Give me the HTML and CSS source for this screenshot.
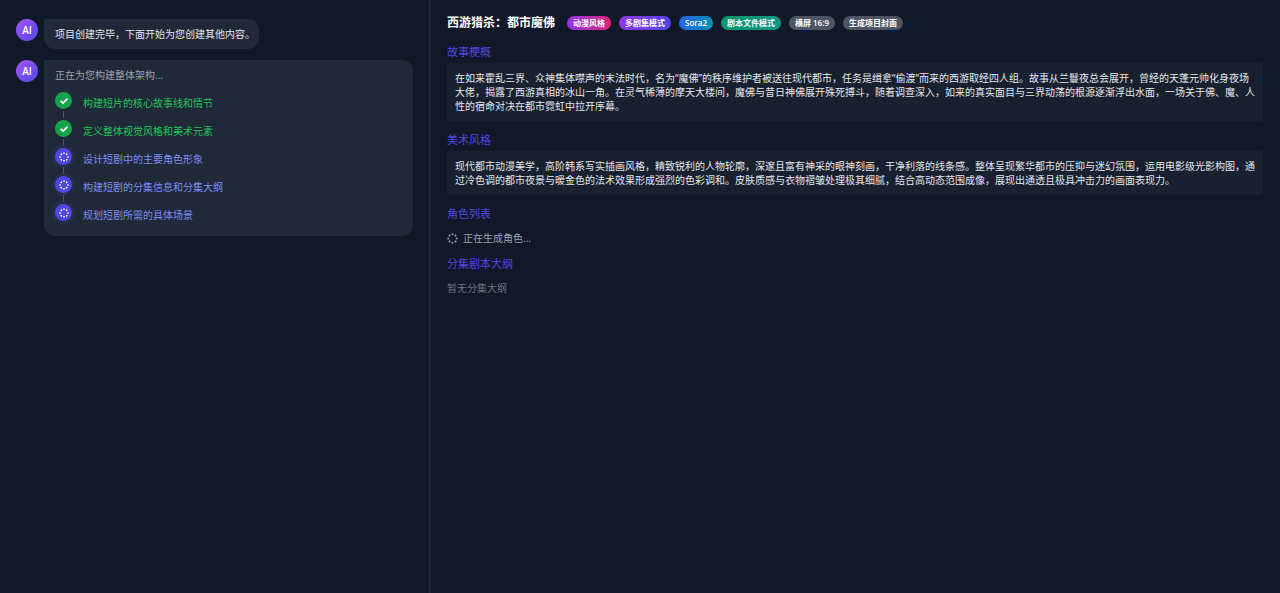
FILE: index.html
```
<!DOCTYPE html>
<html lang="zh-CN">
<head>
<meta charset="utf-8">
<meta name="viewport" content="width=device-width, initial-scale=1">
<title>西游猎杀：都市魔佛</title>
<link rel="stylesheet" href="styles.css">
</head>
<body>
<svg width="0" height="0" class="sprite" aria-hidden="true">
  <symbol id="check" viewBox="0 0 10 10"><path d="M1.6 4.8 4 7 8.5 2.6" fill="none" stroke="currentColor" stroke-width="1.7"/></symbol>
  <symbol id="spinner" viewBox="0 0 12 12"><circle cx="6" cy="6" r="4.6" fill="none" stroke="currentColor" stroke-width="1.8" pathLength="80" stroke-dasharray="5.4 4.6" stroke-dashoffset="2.7"/></symbol>
</svg>
<div class="app">
  <aside class="chat">
    <div class="message">
      <span class="avatar">AI</span>
      <div class="bubble">项目创建完毕，下面开始为您创建其他内容。</div>
    </div>
    <div class="message">
      <span class="avatar">AI</span>
      <div class="bubble bubble-wide">
        <p class="progress-title">正在为您构建整体架构...</p>
        <ol class="steps">
          <li class="step done"><span class="step-icon"><svg><use href="#check"/></svg></span><span class="step-label">构建短片的核心故事线和情节</span></li>
          <li class="step done"><span class="step-icon"><svg><use href="#check"/></svg></span><span class="step-label">定义整体视觉风格和美术元素</span></li>
          <li class="step active"><span class="step-icon"><svg><use href="#spinner"/></svg></span><span class="step-label">设计短剧中的主要角色形象</span></li>
          <li class="step active"><span class="step-icon"><svg><use href="#spinner"/></svg></span><span class="step-label">构建短剧的分集信息和分集大纲</span></li>
          <li class="step active"><span class="step-icon"><svg><use href="#spinner"/></svg></span><span class="step-label">规划短剧所需的具体场景</span></li>
        </ol>
      </div>
    </div>
  </aside>
  <main class="project">
    <header class="project-header">
      <h1 class="project-title">西游猎杀：都市魔佛</h1>
      <span class="badge badge-style">动漫风格</span>
      <span class="badge badge-series">多剧集模式</span>
      <span class="badge badge-model">Sora2</span>
      <span class="badge badge-script">剧本文件模式</span>
      <span class="badge">横屏 16:9</span>
      <button type="button" class="badge">生成项目封面</button>
    </header>
    <section class="section">
      <h2 class="section-title">故事梗概</h2>
      <p class="card">在如来霍乱三界、众神集体噤声的末法时代，名为“魔佛”的秩序维护者被送往现代都市，任务是缉拿“偷渡”而来的西游取经四人组。故事从兰鬘夜总会展开，曾经的天蓬元帅化身夜场大佬，揭露了西游真相的冰山一角。在灵气稀薄的摩天大楼间，魔佛与昔日神佛展开殊死搏斗，随着调查深入，如来的真实面目与三界动荡的根源逐渐浮出水面，一场关于佛、魔、人性的宿命对决在都市霓虹中拉开序幕。</p>
    </section>
    <section class="section">
      <h2 class="section-title">美术风格</h2>
      <p class="card">现代都市动漫美学，高阶韩系写实插画风格，精致锐利的人物轮廓，深邃且富有神采的眼神刻画，干净利落的线条感。整体呈现繁华都市的压抑与迷幻氛围，运用电影级光影构图，通过冷色调的都市夜景与暖金色的法术效果形成强烈的色彩调和。皮肤质感与衣物褶皱处理极其细腻，结合高动态范围成像，展现出通透且极具冲击力的画面表现力。</p>
    </section>
    <section class="section">
      <h2 class="section-title">角色列表</h2>
      <p class="status"><svg class="status-icon"><use href="#spinner"/></svg>正在生成角色...</p>
    </section>
    <section class="section">
      <h2 class="section-title">分集剧本大纲</h2>
      <p class="status status-empty">暂无分集大纲</p>
    </section>
  </main>
</div>
</body>
</html>
```
FILE: styles.css
```
* {
  box-sizing: border-box;
}

body {
  margin: 0;
  background: #111827;
  color: #e5e7eb;
  font-family: "Open Sans", "Noto Sans CJK SC", sans-serif;
  font-size: 10px;
  line-height: 14px;
}

h1, h2, p, ol {
  margin: 0;
  padding: 0;
}

.sprite {
  position: absolute;
}

.app {
  display: grid;
  grid-template-columns: minmax(0, 429fr) minmax(0, 851fr);
  min-height: 100vh;
}

/* Chat column */
.chat {
  padding: 19px 16px;
  display: flex;
  flex-direction: column;
  gap: 11px;
}

.message {
  display: flex;
  align-items: flex-start;
  gap: 6px;
}

.avatar {
  flex: none;
  width: 22px;
  height: 22px;
  border-radius: 50%;
  background: linear-gradient(135deg, #a855f7, #4f46e5);
  color: #fff;
  font-weight: 600;
  line-height: 22px;
  text-align: center;
}

.bubble {
  padding: 8px 4px 8px 11px;
  border-radius: 0 11px 11px 11px;
  background: #1f2937;
}

.bubble-wide {
  flex: 1;
  padding-bottom: 14px;
}

.progress-title {
  color: #9ca3af;
}

.steps {
  margin-top: 10px;
  list-style: none;
}

.step {
  position: relative;
  display: flex;
  gap: 11px;
  padding-bottom: 10px;
}

.step:last-child {
  padding-bottom: 0;
}

.step:not(:last-child)::after {
  content: "";
  position: absolute;
  left: 8px;
  bottom: 2px;
  width: 1px;
  height: 7px;
  background: #4b5563;
}

.step-icon {
  flex: none;
  display: flex;
  align-items: center;
  justify-content: center;
  width: 17px;
  height: 17px;
  border-radius: 50%;
  color: #fff;
}

.step-icon svg {
  width: 10px;
  height: 10px;
}

.step-label {
  padding-top: 4px;
}

.done .step-icon {
  background: #16a34a;
}

.done .step-label {
  color: #22c55e;
}

.active .step-icon {
  background: #4f46e5;
  box-shadow: 0 0 0 3px rgba(79, 70, 229, 0.12);
}

.active .step-label {
  color: #818cf8;
}

/* Project column */
.project {
  padding: 15px 17px 15px 16px;
  border-left: 2px solid #1f2937;
}

.project-header {
  display: flex;
  flex-wrap: wrap;
  align-items: center;
  gap: 8px;
  margin-bottom: 13px;
}

.project-title {
  margin-right: 4px;
  color: #fff;
  font-size: 12px;
  font-weight: 700;
  line-height: 16px;
}

.badge {
  padding: 0 6px;
  border: 0;
  border-radius: 7px;
  background: #4b5563;
  color: #fff;
  font-family: inherit;
  font-size: 8px;
  font-weight: 600;
  line-height: 14px;
}

.badge-style {
  background: linear-gradient(90deg, #9333ea, #db2777);
}

.badge-series {
  background: linear-gradient(90deg, #9333ea, #4f46e5);
}

.badge-model {
  background: linear-gradient(90deg, #2563eb, #0891b2);
}

.badge-script {
  background: linear-gradient(90deg, #059669, #0d9488);
}

.section {
  margin-bottom: 11px;
}

.section-title {
  margin-bottom: 3px;
  color: #4f46e5;
  font-size: 11px;
  font-weight: 400;
  line-height: 16px;
}

.card {
  padding: 8px;
  border-radius: 3px;
  background: #18212f;
}

.status {
  display: flex;
  align-items: center;
  gap: 5px;
  padding-top: 6px;
  color: #9ca3af;
}

.status-icon {
  width: 11px;
  height: 11px;
}

.status-empty {
  color: #6b7280;
}
```
